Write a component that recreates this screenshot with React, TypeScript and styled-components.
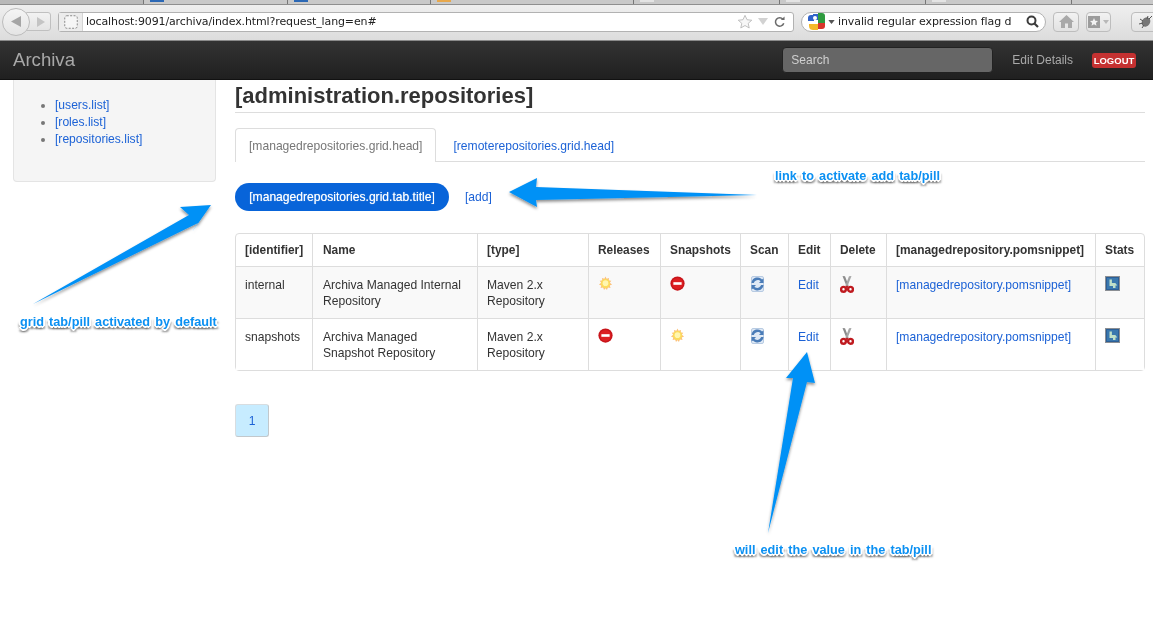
import React from "react";
import styled, { createGlobalStyle } from "styled-components";

const Global = createGlobalStyle`
  html, body { margin: 0; padding: 0; background: #fff; }
  body { font-family: "Liberation Sans", Arial, sans-serif; color: #333; font-size: 12.1px; line-height: 16px; }
  * { box-sizing: border-box; }
`;

const Page = styled.div`
  position: relative;
  width: 1153px;
  height: 630px;
  overflow: hidden;
  background: #fff;
  filter: blur(0.3px);
`;

/* ---------- browser chrome ---------- */
const TabStrip = styled.div`
  display: flex;
  height: 5px;
  background: #b9b9b9;
  padding-left: 143px;
  border-bottom: 1px solid #8f8f8f;
`;
const BrowserTab = styled.div`
  position: relative;
  width: ${(p) => p.$w}px;
  height: 4px;
  background: #c9c9c9;
  border-left: 1px solid #777;
  overflow: hidden;
`;
const Fav = styled.span`
  display: block;
  width: 14px;
  height: 2px;
  margin-left: 6px;
  background: ${(p) => p.$c};
`;
const BrowserBar = styled.div`
  display: flex;
  align-items: center;
  height: 36px;
  padding: 0 0 2px 2px;
  background: linear-gradient(#efefef, #dcdcdc);
  border-bottom: 1px solid #8a8a8a;
`;
const NavPair = styled.div`
  flex: none;
  display: flex;
  align-items: center;
  width: 49px;
  height: 26px;
  margin-right: 7px;
`;
const BackCircle = styled.div`
  display: flex;
  align-items: center;
  justify-content: center;
  width: 28px;
  height: 28px;
  border-radius: 50%;
  border: 1px solid #bcbcbc;
  background: linear-gradient(#f5f5f5, #e4e4e4);
  z-index: 1;
`;
const ForwardBox = styled.div`
  display: flex;
  align-items: center;
  justify-content: center;
  width: 25px;
  height: 19px;
  margin-left: -4px;
  padding-left: 3px;
  border: 1px solid #c0c0c0;
  border-radius: 0 3px 3px 0;
  background: linear-gradient(#f2f2f2, #e4e4e4);
`;
const UrlField = styled.div`
  flex: none;
  display: flex;
  align-items: center;
  width: 736px;
  height: 20px;
  margin-right: 7px;
  padding-right: 8px;
  background: #fff;
  border: 1px solid #b2b2b2;
  border-radius: 3px;
`;
const SiteIcon = styled.div`
  flex: none;
  display: flex;
  align-items: center;
  justify-content: center;
  width: 24px;
  height: 18px;
  margin-right: 3px;
  background: #ececec;
  border-right: 1px solid #d4d4d4;
`;
const UrlText = styled.span`
  flex: 1;
  font-family: "DejaVu Sans", sans-serif;
  font-size: 11px;
  letter-spacing: -0.12px;
  color: #222;
  white-space: nowrap;
`;
const SearchField = styled.div`
  flex: none;
  display: flex;
  align-items: center;
  width: 245px;
  height: 20px;
  margin-right: 7px;
  padding: 0 6px;
  background: #fff;
  border: 1px solid #b2b2b2;
  border-radius: 10px;
`;
const SearchText = styled.span`
  flex: 1;
  font-family: "DejaVu Sans", sans-serif;
  font-size: 11px;
  letter-spacing: -0.1px;
  color: #222;
  white-space: nowrap;
`;
const ChromeButton = styled.div`
  display: flex;
  align-items: center;
  justify-content: center;
  flex: none;
  width: ${(p) => p.$w}px;
  height: 20px;
  margin-right: ${(p) => p.$gap}px;
  border: 1px solid #bdbdbd;
  border-radius: 4px;
  background: linear-gradient(#f2f2f2, #e2e2e2);
`;

/* ---------- app navbar ---------- */
const Navbar = styled.header`
  display: flex;
  align-items: center;
  height: 39px;
  padding: 0 17px 0 13px;
  background: linear-gradient(#333, #202020);
  border-bottom: 1px solid #111;
`;
const Brand = styled.div`
  flex: 1;
  font-size: 18.6px;
  color: #a8a8a8;
`;
const NavSearch = styled.div`
  width: 211px;
  height: 26px;
  margin-right: 19px;
  padding: 0 8px;
  line-height: 24px;
  font-size: 12px;
  color: #d0d0d0;
  background: #666;
  border: 1px solid #222;
  border-radius: 4px;
`;
const NavLink = styled.div`
  margin-right: 19px;
  font-size: 12px;
  color: #a9a9a9;
`;
const Logout = styled.div`
  width: 44px;
  height: 15px;
  font-size: 9.5px;
  line-height: 15px;
  font-weight: bold;
  text-align: center;
  color: #fff;
  background: #c43131;
  border-radius: 3px;
`;

/* ---------- page body ---------- */
const Body = styled.div`
  display: flex;
  align-items: flex-start;
  padding-left: 13px;
`;
const Sidebar = styled.aside`
  flex: none;
  width: 203px;
  height: 102px;
  margin-right: 19px;
  padding-top: 17px;
  background: #f5f5f5;
  border: 1px solid #e4e4e4;
  border-top: 0;
  border-radius: 0 0 4px 4px;
`;
const SideList = styled.ul`
  margin: 0;
  padding: 0 0 0 41px;
  color: #777;
  line-height: 17px;
`;
const Link = styled.a`
  color: #1c62d6;
  text-decoration: none;
`;
const Main = styled.main`
  flex: none;
  width: 910px;
`;
const Title = styled.h1`
  height: 33px;
  margin: 0 0 15px;
  font-size: 22px;
  line-height: 32px;
  font-weight: bold;
  color: #333;
  border-bottom: 1px solid #ddd;
`;
const TabRow = styled.div`
  display: flex;
  height: 34px;
  margin-bottom: 21px;
  border-bottom: 1px solid #ddd;
`;
const Tab = styled.div`
  height: 34px;
  padding: 0 ${(p) => (p.$active ? 13 : 16)}px;
  line-height: 34px;
  white-space: nowrap;
  color: ${(p) => (p.$active ? "#777" : "#1c62d6")};
  background: ${(p) => (p.$active ? "#fff" : "transparent")};
  border: 1px solid ${(p) => (p.$active ? "#ddd" : "transparent")};
  border-bottom: 0;
  border-radius: 4px 4px 0 0;
`;
const PillRow = styled.div`
  display: flex;
  align-items: center;
  height: 28px;
  margin-bottom: 22px;
`;
const Pill = styled.div`
  width: 214px;
  height: 28px;
  margin-right: 16px;
  line-height: 28px;
  text-align: center;
  white-space: nowrap;
  color: #fff;
  text-shadow: 0 0 1px rgba(255, 255, 255, 0.7);
  background: #0864d9;
  border-radius: 14px;
`;
const Grid = styled.table`
  width: 910px;
  table-layout: fixed;
  border-collapse: separate;
  border-spacing: 0;
  border: 1px solid #ddd;
  border-radius: 4px;
  margin-bottom: 33px;
`;
const HeadCell = styled.th`
  height: 32px;
  padding: 0 0 0 ${(p) => p.$pad}px;
  text-align: left;
  font-weight: bold;
  font-size: 11.9px;
  white-space: nowrap;
  color: #333;
  border-left: ${(p) => (p.$first ? "0" : "1px solid #ddd")};
`;
const Row = styled.tr`
  background: ${(p) => (p.$odd ? "#f9f9f9" : "#fff")};
`;
const Cell = styled.td`
  height: 52px;
  padding: 10px 10px 8px ${(p) => p.$pad ?? 9}px;
  vertical-align: top;
  color: #333;
  border-top: 1px solid #ddd;
  border-left: ${(p) => (p.$first ? "0" : "1px solid #ddd")};
`;
const CellIcon = styled.svg`
  display: block;
  margin-top: -1px;
`;
const Pager = styled.div`
  width: 34px;
  height: 33px;
  line-height: 33px;
  text-align: center;
  color: #1c62d6;
  background: #c7ecff;
  border: 1px solid #d8dde0;
  border-right-color: #c2c8cc;
  border-bottom-color: #c2c8cc;
  border-radius: 3px;
`;

/* ---------- annotations ---------- */
const ArrowLayer = styled.svg`
  position: absolute;
  left: 0;
  top: 0;
  width: 1153px;
  height: 630px;
  pointer-events: none;
`;
const Note = styled.div`
  position: absolute;
  left: ${(p) => p.$x}px;
  top: ${(p) => p.$y}px;
  white-space: nowrap;
  font-size: 12.7px;
  line-height: 16px;
  font-weight: bold;
  word-spacing: 1.6px;
  color: #0b90f2;
  text-shadow: 1px 0 0 #fff, -1px 0 0 #fff, 0 1px 0 #fff, 0 -1px 0 #fff,
    1px 1px 0 #fff, -1px -1px 0 #fff, 1px -1px 0 #fff, -1px 1px 0 #fff,
    2px 0 0 #fff, -2px 0 0 #fff, 0 2px 0 #fff, 0 -2px 0 #fff,
    2px 3px 2px rgba(0, 0, 0, 0.4), -2px 3px 2px rgba(0, 0, 0, 0.4),
    0 3px 2px rgba(0, 0, 0, 0.4);
`;

/* ---------- icons ---------- */
const Sun = () => (
  <CellIcon width="15" height="15" viewBox="0 0 16 16">
    <path d="M8 .5 9.200 3l2.600-1-.4 2.800 2.800.2-1.600 2.300L15 9l-2.500 1 .9 2.700-2.800-.4L9.500 15 8 13l-1.600 2-.9-2.700-2.800.4.9-2.700L1 9l2.400-1.700L1.800 5l2.800-.2L4.200 2l2.600 1z" fill="#fcc27a" />
    <circle cx="8" cy="8" r="4.800" fill="#fcdc5c" />
    <circle cx="8" cy="7.600" r="3" fill="#fff6b0" />
  </CellIcon>
);
const NoEntry = () => (
  <CellIcon width="15" height="15" viewBox="0 0 16 16">
    <circle cx="8" cy="8" r="7.600" fill="#c8141a" />
    <circle cx="8" cy="8" r="6" fill="#dc1f22" />
    <rect x="3.600" y="6.600" width="8.800" height="2.800" fill="#fff" />
  </CellIcon>
);
const Refresh = () => (
  <CellIcon width="15" height="16" viewBox="0 0 15 16">
    <rect x="1.500" y=".5" width="12" height="15" rx="1.500" fill="#dfe9f5" stroke="#a9c0dc" strokeWidth=".8" />
    <path d="M1.500 7C2 3 5 1.300 8 1.600c2 .2 3 1 4 2l1.500-1.200V7H9l1.600-1.700C9 3.600 5.500 3.400 3.800 7z" fill="#4a7cb8" />
    <path d="M13.500 9c-.5 4-3.500 5.700-6.500 5.400-2-.2-3-1-4-2l-1.500 1.200V9H6L4.400 10.700c1.600 1.700 5.100 1.900 6.800-1.700z" fill="#4a7cb8" />
  </CellIcon>
);
const Scissors = () => (
  <CellIcon width="14" height="17" viewBox="0 0 14 17">
    <path d="M2.500 0 5 .3 8.600 9.800 6.800 11z" fill="#8c8c8c" />
    <path d="M11.500 0 9 .3 5.400 9.800 7.200 11z" fill="#a6a6a6" />
    <circle cx="3.500" cy="13.300" r="2.400" fill="#fff" stroke="#bf1a1f" strokeWidth="2.400" />
    <circle cx="10.500" cy="13.300" r="2.400" fill="#fff" stroke="#bf1a1f" strokeWidth="2.400" />
    <path d="M4.500 11.500 7 9.600l2.500 1.900-1.200 1.200L7 11.500l-1.300 1.200z" fill="#bf1a1f" />
  </CellIcon>
);
const Stats = () => (
  <CellIcon width="15" height="15" viewBox="0 0 15 15">
    <rect x=".5" y=".5" width="14" height="14" fill="#2c5f96" stroke="#8b8f94" />
    <rect x="2" y="2" width="11" height="11" fill="#3a78ae" />
    <path d="M4.500 3.500h2.400v3.500h3.400l2 2.500H10.500V12H8V10H4.500z" fill="#c0e0c8" />
  </CellIcon>
);

const rows = [
  { id: "internal", name: "Archiva Managed Internal Repository", rel: <Sun />, snap: <NoEntry />, odd: true },
  { id: "snapshots", name: "Archiva Managed Snapshot Repository", rel: <NoEntry />, snap: <Sun />, odd: false },
];

const headers = ["[identifier]", "Name", "[type]", "Releases", "Snapshots", "Scan", "Edit", "Delete", "[managedrepository.pomsnippet]", "Stats"];
const widths = [76, 165, 111, 72, 80, 48, 42, 56, 209, 49];

export default function App() {
  return (
    <Page>
      <Global />
      <TabStrip>
        <BrowserTab $w={144}><Fav $c="#2b68b5" /></BrowserTab>
        <BrowserTab $w={143}><Fav $c="#2b68b5" /></BrowserTab>
        <BrowserTab $w={203}><Fav $c="#e8a84c" /></BrowserTab>
        <BrowserTab $w={146}><Fav $c="#e4e4e4" /></BrowserTab>
        <BrowserTab $w={146}><Fav $c="#e4e4e4" /></BrowserTab>
        <BrowserTab $w={146}><Fav $c="#e4e4e4" /></BrowserTab>
        <BrowserTab $w={82}><Fav $c="#c9c9c9" /></BrowserTab>
      </TabStrip>
      <BrowserBar>
        <NavPair>
          <BackCircle>
            <svg width="12" height="13" viewBox="0 0 12 13"><path d="M11 1v11L1 6.500z" fill="#a5a5a5" /></svg>
          </BackCircle>
          <ForwardBox>
            <svg width="9" height="10" viewBox="0 0 9 10"><path d="M1 0v10l8-5z" fill="#c4c4c4" /></svg>
          </ForwardBox>
        </NavPair>
        <UrlField>
          <SiteIcon>
            <svg width="14" height="14" viewBox="0 0 14 14"><rect x=".75" y=".75" width="12.500" height="12.500" rx="2" fill="#f6f6f6" stroke="#8a8a8a" strokeWidth="1" strokeDasharray="2 1.400" /></svg>
          </SiteIcon>
          <UrlText>localhost:9091/archiva/index.html?request_lang=en#</UrlText>
          <svg width="16" height="15" viewBox="0 0 19 17"><path d="M9.500 1.200 11.900 6.400l5.600.6-4.200 3.700 1.200 5.500-5-2.900-5 2.900 1.200-5.500L1.500 7l5.600-.6z" fill="#f7f7f7" stroke="#b5b5b5" /></svg>
          <svg width="10" height="7" viewBox="0 0 10 7" style={{ margin: "0 6px 0 5px" }}><path d="M0 0h10L5 7z" fill="#d2d2d2" /></svg>
          <svg width="11" height="12" viewBox="0 0 13 13"><path d="M10.600 3.200A5 5 0 1 0 11.500 8" fill="none" stroke="#6a6a6a" strokeWidth="1.800" /><path d="M8 4h4.500V0z" fill="#6a6a6a" /></svg>
        </UrlField>
        <SearchField>
          <svg width="18" height="18" viewBox="0 0 18 18">
            <path d="M5 1h5v6H5z" fill="#2f62c9" />
            <path d="M10 0h4c2 0 3 1 3 3v8h-7z" fill="#2e9b3f" />
            <path d="M0 5c0-2 1-3 3-3h3v6H0z" fill="#2f62c9" />
            <path d="M10 10h7v3c0 2-1 3-3 3h-4z" fill="#d8352b" />
            <path d="M1 11h9v6H5c-2 0-4-1-4-4z" fill="#f4b928" />
            <circle cx="7" cy="5" r="2" fill="#fff" />
          </svg>
          <svg width="7" height="4" viewBox="0 0 8 5" style={{ margin: "0 3px 0 2px" }}><path d="M0 0h8L4 5z" fill="#555" /></svg>
          <SearchText>invalid regular expression flag d</SearchText>
          <svg width="13" height="13" viewBox="0 0 13 13"><circle cx="5.500" cy="5.500" r="4" fill="none" stroke="#3c3c3c" strokeWidth="2" /><path d="m8.500 8.500 3.500 3.500" stroke="#3c3c3c" strokeWidth="2.200" /></svg>
        </SearchField>
        <ChromeButton $w={26} $gap={7}>
          <svg width="15" height="13" viewBox="0 0 15 13"><path d="M7.500 0 15 7h-2v6H9V8.500H6V13H2V7H0z" fill="#a9a9a9" /></svg>
        </ChromeButton>
        <ChromeButton $w={25} $gap={20}>
          <svg width="12" height="12" viewBox="0 0 12 12"><rect width="12" height="12" fill="#9c9c9c" /><path d="M6 2l1.200 2.700 2.800.3-2.100 1.900.6 2.900L6 8.300 3.500 9.800l.6-2.900L2 5l2.800-.3z" fill="#f2f2f2" /></svg>
          <svg width="6" height="4" viewBox="0 0 6 4" style={{ marginLeft: 3 }}><path d="M0 0h6L3 4z" fill="#b8b8b8" /></svg>
        </ChromeButton>
        <ChromeButton $w={30} $gap={0}>
          <svg width="14" height="13" viewBox="0 0 14 13"><ellipse cx="7" cy="7" rx="4" ry="5" transform="rotate(35 7 7)" fill="#777" /><path d="M1 4l3 2M0 9l4-1M3 13l2-3M9 1 8 4M13 1l-3 3" stroke="#555" strokeWidth="1" /></svg>
        </ChromeButton>
      </BrowserBar>

      <Navbar>
        <Brand>Archiva</Brand>
        <NavSearch>Search</NavSearch>
        <NavLink>Edit Details</NavLink>
        <Logout>LOGOUT</Logout>
      </Navbar>

      <Body>
        <Sidebar>
          <SideList>
            <li><Link>[users.list]</Link></li>
            <li><Link>[roles.list]</Link></li>
            <li><Link>[repositories.list]</Link></li>
          </SideList>
        </Sidebar>
        <Main>
          <Title>[administration.repositories]</Title>
          <TabRow>
            <Tab $active>[managedrepositories.grid.head]</Tab>
            <Tab>[remoterepositories.grid.head]</Tab>
          </TabRow>
          <PillRow>
            <Pill>[managedrepositories.grid.tab.title]</Pill>
            <Link>[add]</Link>
          </PillRow>
          <Grid>
            <colgroup>
              {widths.map((w, i) => <col key={i} style={{ width: w }} />)}
            </colgroup>
            <thead>
              <tr>
                {headers.map((h, i) => <HeadCell key={h} $first={i === 0} $pad={i === 1 ? 10 : 9}>{h}</HeadCell>)}
              </tr>
            </thead>
            <tbody>
              {rows.map((r) => (
                <Row key={r.id} $odd={r.odd}>
                  <Cell $first>{r.id}</Cell>
                  <Cell $pad={10}>{r.name}</Cell>
                  <Cell>Maven 2.x Repository</Cell>
                  <Cell>{r.rel}</Cell>
                  <Cell>{r.snap}</Cell>
                  <Cell><Refresh /></Cell>
                  <Cell><Link>Edit</Link></Cell>
                  <Cell><Scissors /></Cell>
                  <Cell><Link>[managedrepository.pomsnippet]</Link></Cell>
                  <Cell><Stats /></Cell>
                </Row>
              ))}
            </tbody>
          </Grid>
          <Pager>1</Pager>
        </Main>
      </Body>

      <ArrowLayer viewBox="0 0 1153 630">
        <defs>
          <filter id="arrowShadow" x="-20%" y="-20%" width="140%" height="140%">
            <feDropShadow dx="0" dy="2" stdDeviation="1.500" floodColor="#000" floodOpacity="0.45" />
          </filter>
        </defs>
        <g fill="#0091f6" filter="url(#arrowShadow)">
          <path d="M509 192 537 178 536 187 757 195 536 200 537 207z" />
          <path d="M211 205 180 207 189 215 33 304 198 223 192 232z" />
          <path d="M807 352 786 378 793 378 768 533 807 382 815 383z" />
        </g>
      </ArrowLayer>
      <Note $x={20} $y={314}>grid tab/pill activated by default</Note>
      <Note $x={775} $y={168}>link to activate add tab/pill</Note>
      <Note $x={735} $y={542}>will edit the value in the tab/pill</Note>
    </Page>
  );
}
